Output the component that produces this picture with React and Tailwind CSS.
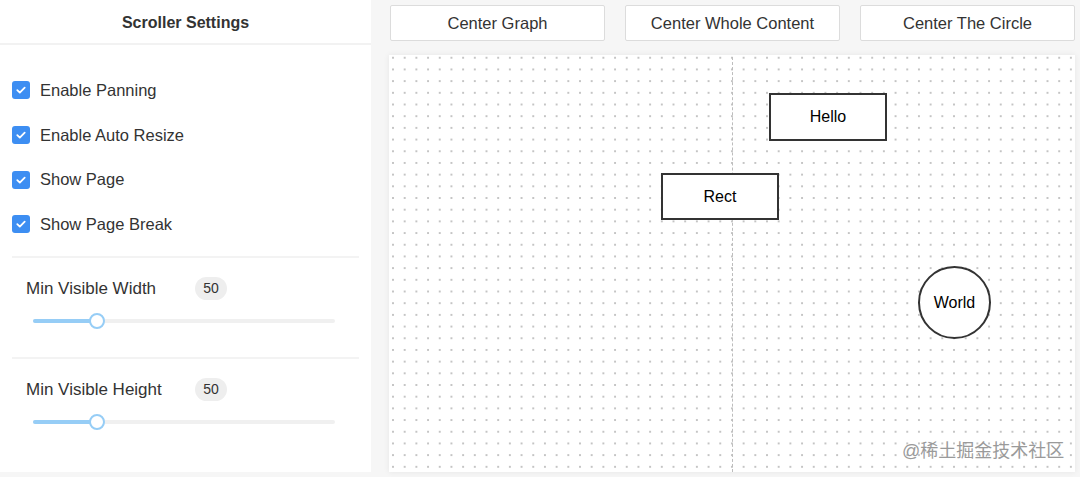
const options = ["Enable Panning", "Enable Auto Resize", "Show Page", "Show Page Break"];

const Check = ({ label }) => (
  <div className="flex items-center h-[44.7px]">
    <span className="w-[18px] h-[18px] rounded-[3px] bg-[#3d8ef2] flex items-center justify-center">
      <svg width="12" height="12" viewBox="0 0 12 12" fill="none">
        <path d="M2.3 6.2l2.5 2.4 4.9-5" stroke="#fff" strokeWidth="1.8" strokeLinecap="round" strokeLinejoin="round" />
      </svg>
    </span>
    <span className="ml-[10px] text-[16.5px] text-[#333]">{label}</span>
  </div>
);

const SliderRow = ({ label }) => (
  <div className="pl-[14px] pr-[24px] pt-[19px] pb-[34px]">
    <div className="flex items-center h-[23px]">
      <span className="w-[169px] text-[17px] text-[#333]">{label}</span>
      <span className="w-[32px] h-[23px] rounded-full bg-[#eeeeee] text-[14px] text-[#333] flex items-center justify-center">50</span>
    </div>
    <div className="relative mt-[19px] ml-[7px] h-[4px] rounded-full bg-[#f0f0f0]">
      <div className="h-[4px] w-[64px] rounded-full bg-[#96cdf6]" />
      <span className="absolute left-[56px] top-[-6px] w-[16px] h-[16px] rounded-full bg-white border-2 border-[#96cdf6]" />
    </div>
  </div>
);

const Node = ({ className, children }) => (
  <div className={"absolute bg-white border-2 border-[#333] flex items-center justify-center text-[16px] text-black " + className}>
    {children}
  </div>
);

export default function App() {
  return (
    <div className="flex h-[477px] w-[1080px] bg-[#f6f6f6] font-['Liberation_Sans',Arial,sans-serif] overflow-hidden">
      <aside className="w-[372px] h-[472px] bg-white flex flex-col">
        <div className="h-[45px] pt-[2px] flex items-center justify-center border-b-2 border-[#f2f2f2] text-[16px] font-semibold text-[#333]">
          Scroller Settings
        </div>
        <div className="pl-[12px] pt-[23px]">
          {options.map((o) => (
            <Check key={o} label={o} />
          ))}
        </div>
        <div className="mx-[12px] mt-[9px] border-t-2 border-[#f3f3f3]">
          <SliderRow label="Min Visible Width" />
        </div>
        <div className="mx-[12px] border-t-2 border-[#f3f3f3]">
          <SliderRow label="Min Visible Height" />
        </div>
      </aside>

      <main className="flex-1 pl-[18px] pr-[5px] pt-[5px] flex flex-col">
        <div className="flex gap-[20px] pl-[1px]">
          {["Center Graph", "Center Whole Content", "Center The Circle"].map((b) => (
            <button key={b} className="w-[215px] h-[36px] bg-white border border-[#dcdcdc] rounded-[2px] text-[16.5px] text-[#333] pt-[1px]">
              {b}
            </button>
          ))}
        </div>
        <div className="relative mt-[14px] h-[417px] bg-white shadow-[0_0_6px_rgba(0,0,0,0.07)] overflow-hidden bg-[radial-gradient(circle,#c4c4c4_0.75px,transparent_1.1px)] bg-[length:11.7px_11.7px] bg-[position:-1.85px_-3.1px]">
          <div className="absolute left-[343px] top-[2px] bottom-0 border-l border-dashed border-[#bdbdbd]" />
          <Node className="left-[380px] top-[38px] w-[118px] h-[48px]">Hello</Node>
          <Node className="left-[272px] top-[118px] w-[118px] h-[47px]">Rect</Node>
          <Node className="left-[529px] top-[211px] w-[73px] h-[73px] rounded-full">World</Node>
          <span className="absolute left-[513px] top-[383px] text-[18px] text-[#9a9a9a] font-['Liberation_Sans','Noto_Sans_CJK_SC',sans-serif]">
            @稀土掘金技术社区
          </span>
        </div>
      </main>
    </div>
  );
}
